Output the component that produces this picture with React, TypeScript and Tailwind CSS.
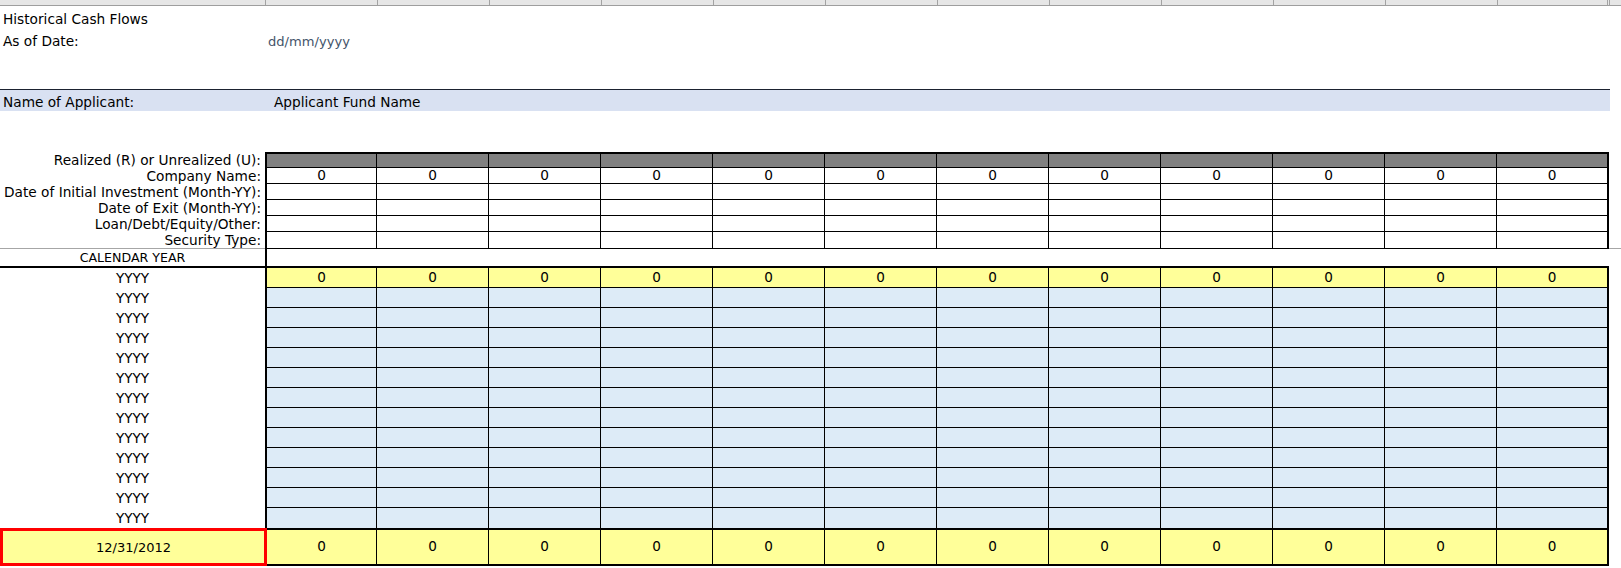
const COLS = Array.from({ length: 12 }, (_, i) => i);

const headerLabels = [
  "Company Name:",
  "Date of Initial Investment (Month-YY):",
  "Date of Exit (Month-YY):",
  "Loan/Debt/Equity/Other:",
  "Security Type:",
];

function cellWidth(i: number) {
  return i === 0 || i === 11 ? "w-[110px]" : "w-[112px]";
}

function Cells({ bg, value }: { bg: string; value?: string }) {
  return (
    <>
      {COLS.map((i) => (
        <div
          key={i}
          className={`${cellWidth(i)} h-full flex items-center justify-center ${bg} ${
            i < 11 ? "border-r border-black" : ""
          }`}
        >
          {value}
        </div>
      ))}
    </>
  );
}

function TopBar() {
  return (
    <div className="flex h-[6px] bg-[#e6e6e6] border-b border-[#9e9e9e]">
      <div className="w-[266px] border-r border-[#a3a3a3]" />
      {Array.from({ length: 11 }, (_, i) => (
        <div key={i} className="w-[112px] border-r border-[#a3a3a3]" />
      ))}
      <div className="w-[110px] border-r border-[#a3a3a3]" />
      <div className="w-[2px] border-r border-[#a3a3a3]" />
    </div>
  );
}

export default function App() {
  return (
    <div className="w-[1621px] h-[568px] overflow-hidden bg-white text-black font-['DejaVu_Sans',sans-serif] text-[13.7px] leading-none">
      <TopBar />

      {/* title */}
      <div className="h-[83px] pl-[3px] pt-[3px]">
        <div className="h-[22px] flex items-center">Historical Cash Flows</div>
        <div className="h-[22px] flex items-center">
          <span className="w-[265px]">As of Date:</span>
          <span className="text-[13.1px] text-[#44546a]">dd/mm/yyyy</span>
        </div>
      </div>

      <div className="w-[1610px] h-[1px] bg-[#1b2230]" />
      <div className="w-[1610px] h-[21px] bg-[#d9e1f2] flex items-center pl-[3px] pt-[5px]">
        <span className="w-[271px]">Name of Applicant:</span>
        <span>Applicant Fund Name</span>
      </div>

      <div className="h-[41px]" />

      {/* header block */}
      <div className="flex h-[16px]">
        <div className="w-[265px] shrink-0 flex items-center justify-end pr-[4px] pt-[1px]">
          Realized (R) or Unrealized (U):
        </div>
        <div className="flex h-full border-t-2 border-b border-l-2 border-r-2 border-black">
          <Cells bg="bg-[#808080]" />
        </div>
      </div>
      {headerLabels.map((label, r) => (
        <div key={label} className="flex h-[16px]">
          <div className="w-[265px] shrink-0 flex items-center justify-end pr-[4px] pt-[1px]">{label}</div>
          <div
            className={`flex h-full border-l-2 border-r-2 border-black ${
              r < headerLabels.length - 1 ? "border-b" : ""
            }`}
          >
            <Cells bg="bg-white" value={r === 0 ? "0" : ""} />
          </div>
        </div>
      ))}
      <div className="flex h-[1px]">
        <div className="w-[265px] bg-[#a6a6a6]" />
        <div className="w-[1344px] bg-black" />
        <div className="flex-1 bg-[#a6a6a6]" />
      </div>

      {/* calendar year */}
      <div className="flex h-[17px]">
        <div className="w-[265px] shrink-0 flex items-center justify-center text-[12.6px] pt-[1px]">
          CALENDAR YEAR
        </div>
        <div className="w-[2px] bg-black" />
      </div>
      <div className="w-[1609px] h-[2px] bg-black" />

      {/* yearly rows */}
      {Array.from({ length: 13 }, (_, r) => (
        <div key={r} className="flex h-[20px]">
          <div className="w-[265px] shrink-0 flex items-center justify-center text-[13.6px] pt-[1px]">YYYY</div>
          <div
            className={`flex h-full border-l-2 border-r-2 border-black text-[13.6px] ${
              r < 12 ? "border-b" : ""
            }`}
          >
            <Cells bg={r === 0 ? "bg-[#ffff99]" : "bg-[#ddebf7]"} value={r === 0 ? "0" : ""} />
          </div>
        </div>
      ))}

      {/* total row */}
      <div className="flex h-[38px]">
        <div className="w-[267px] shrink-0 flex items-center justify-center bg-[#ffff99] border-[3px] border-[#ff0000] text-[13px]">
          12/31/2012
        </div>
        <div className="flex h-full border-t-2 border-b-2 border-r-2 border-black text-[13.6px]">
          {COLS.map((i) => (
            <div
              key={i}
              className={`${cellWidth(i)} h-full flex items-center justify-center bg-[#ffff99] ${
                i < 11 ? "border-r border-black" : ""
              }`}
            >
              0
            </div>
          ))}
        </div>
      </div>
    </div>
  );
}
